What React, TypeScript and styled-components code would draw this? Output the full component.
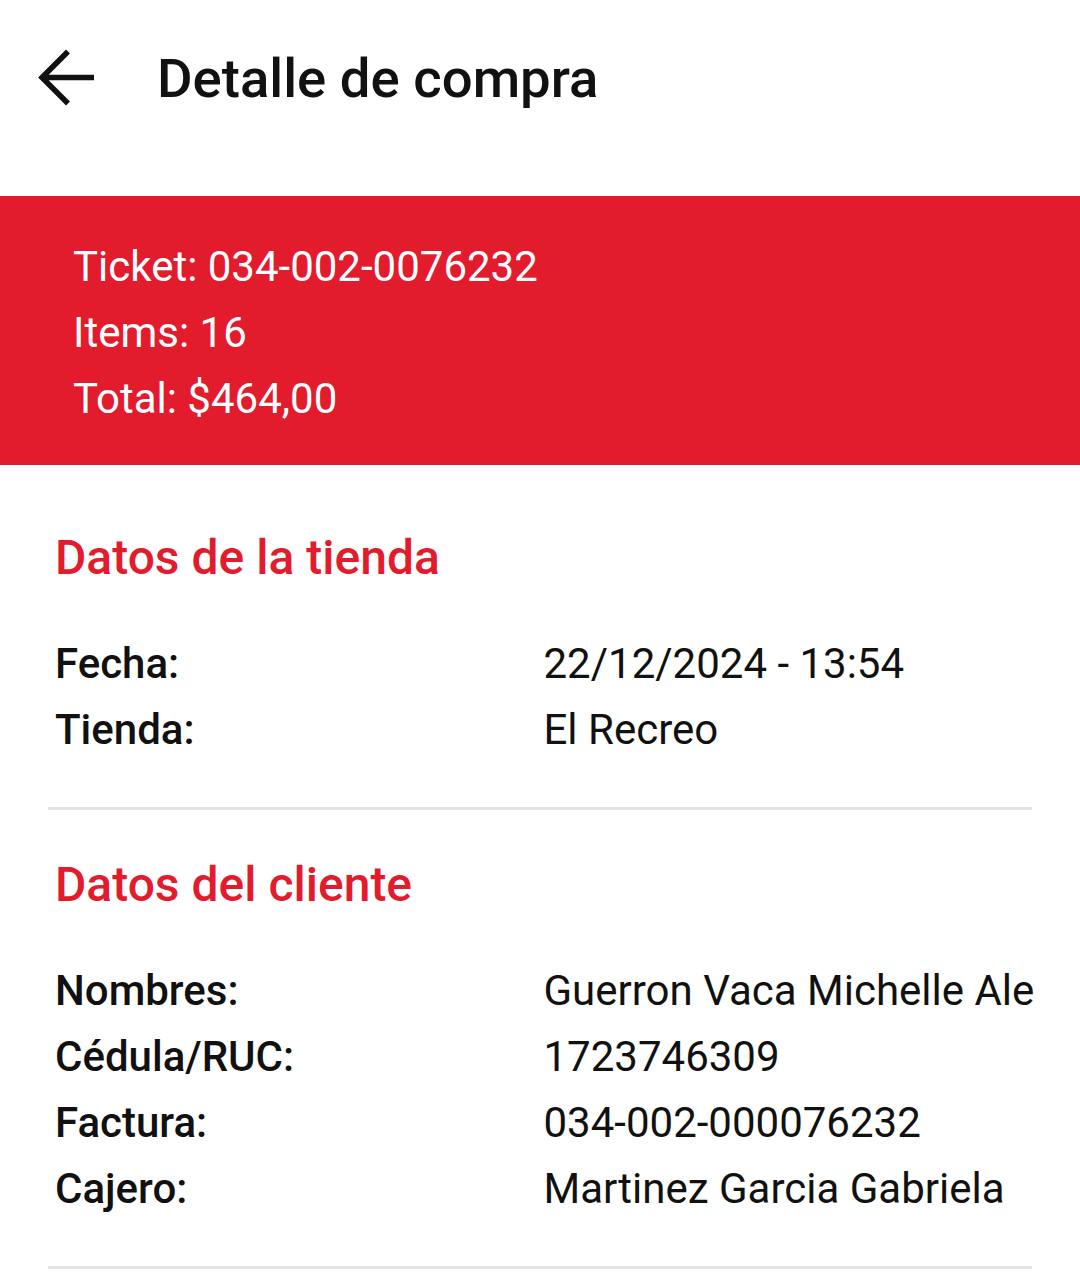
import React from "react";
import styled, {createGlobalStyle} from "styled-components";

const RED = "#e21b2d";

const TIENDA = [
  {id: 1, label: "Fecha:", value: "22/12/2024 - 13:54"},
  {id: 2, label: "Tienda:", value: "El Recreo"},
];

const CLIENTE = [
  {id: 1, label: "Nombres:", value: "Guerron Vaca Michelle Ale"},
  {id: 2, label: "Cédula/RUC:", value: "1723746309"},
  {id: 3, label: "Factura:", value: "034-002-000076232"},
  {id: 4, label: "Cajero:", value: "Martinez Garcia Gabriela"},
];

const GlobalStyle = createGlobalStyle`
  body {
    margin: 0;
    background: #ffffff;
    font-family: Roboto, "Noto Sans", Arial, sans-serif;
    color: #111111;
  }
`;

const BackArrow = () => (
  <svg width="60" height="60" viewBox="0 0 60 60" fill="none">
    <path
      d="M57 29.5H5 M31 3.5L5 29.5L31 55.5"
      stroke="#111"
      strokeWidth="5.5"
    />
  </svg>
);

type Row = {id: number; label: string; value: string};

const Section = ({title, rows, $top}: {title: string; rows: Row[]; $top: number}) => (
  <StyledSection $top={$top}>
    <h2 className="heading">{title}</h2>
    <div className="rows">
      {rows.map((row) => (
        <React.Fragment key={row.id}>
          <span className="label">{row.label}</span>
          <span className="value">{row.value}</span>
        </React.Fragment>
      ))}
    </div>
  </StyledSection>
);

const App = () => {
  return (
    <StyledPage>
      <GlobalStyle />
      <header className="topbar">
        <button className="back" aria-label="Volver">
          <BackArrow />
        </button>
        <h1 className="title">Detalle de compra</h1>
      </header>

      <div className="summary">
        <p>Ticket: 034-002-0076232</p>
        <p>Items: 16</p>
        <p>Total: $464,00</p>
      </div>

      <Section title="Datos de la tienda" rows={TIENDA} $top={64} />
      <Section title="Datos del cliente" rows={CLIENTE} $top={46} />
    </StyledPage>
  );
};

export default App;

const StyledPage = styled.main`
  width: 1080px;
  min-height: 1279px;
  background: #ffffff;
  overflow: hidden;

  .topbar {
    height: 156px;
    margin-bottom: 40px;
    display: flex;
    align-items: center;
    padding-left: 37px;
    box-sizing: border-box;
  }

  .back {
    border: none;
    background: none;
    padding: 0;
    width: 60px;
    height: 60px;
    display: flex;
    margin-right: 60px;
  }

  .title {
    margin: 0;
    font-size: 54.5px;
    font-weight: 500;
    color: #111111;
  }

  .summary {
    background: ${RED};
    height: 269px;
    box-sizing: border-box;
    padding: 38px 73px 0;
    color: #ffffff;
  }

  .summary p {
    margin: 0;
    font-size: 42px;
    line-height: 66px;
  }
`;

const StyledSection = styled.section<{$top: number}>`
  margin: 0 48px;
  padding: ${(props) => props.$top}px 0 44px 7px;
  border-bottom: 3px solid #e5e5e5;

  .heading {
    margin: 0 0 44px;
    font-size: 48px;
    line-height: 58px;
    font-weight: 500;
    color: ${RED};
  }

  .rows {
    display: grid;
    grid-template-columns: minmax(0, 1fr) minmax(0, 1fr);
  }

  .label,
  .value {
    font-size: 42px;
    line-height: 66px;
    color: #111111;
    white-space: nowrap;
  }

  .label {
    font-weight: 500;
  }
`;
